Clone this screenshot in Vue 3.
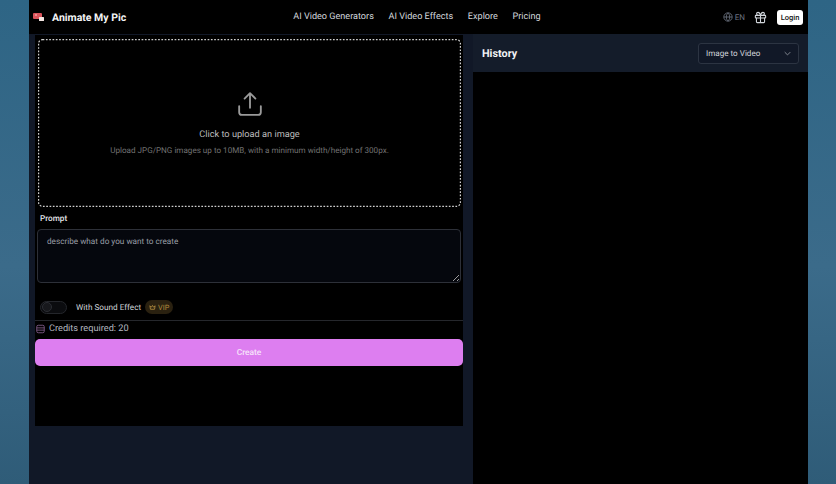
<template>
  <div class="desktop">
    <div class="window">
      <header class="topbar">
        <div class="brand">
          <svg class="logo" width="12" height="10" viewBox="0 0 12 10">
            <rect x="0" y="1" width="9" height="6" rx="1" fill="#d9535a" />
            <circle cx="3" cy="3" r="1" fill="#f0a0a0" />
            <rect x="6" y="5" width="5" height="4" rx="0.5" fill="#f3e6e2" />
          </svg>
          <span class="brand-name">Animate My Pic</span>
        </div>
        <nav class="nav">
          <a v-for="item in navItems" :key="item" class="nav-link">{{ item }}</a>
        </nav>
        <div class="actions">
          <span class="lang">
            <svg width="10" height="10" viewBox="0 0 24 24" fill="none" stroke="currentColor" stroke-width="2">
              <circle cx="12" cy="12" r="10" />
              <path d="M2 12h20M12 2c3 3 4 6.500 4 10s-1 7-4 10c-3-3-4-6.500-4-10s1-7 4-10z" />
            </svg>
            EN
          </span>
          <svg class="gift" width="13" height="13" viewBox="0 0 24 24" fill="none" stroke="currentColor" stroke-width="2" stroke-linejoin="round" stroke-linecap="round">
            <rect x="2.500" y="8" width="19" height="5" rx="1" />
            <path d="M4.500 13v7a1.500 1.500 0 0 0 1.500 1.500h12a1.500 1.500 0 0 0 1.500-1.500v-7M12 8v13.500" />
            <path d="M12 8S10.500 2.500 7.500 2.500a2.700 2.700 0 0 0 0 5.500M12 8s1.500-5.500 4.500-5.500a2.700 2.700 0 0 1 0 5.500" />
          </svg>
          <button class="login">Login</button>
        </div>
      </header>

      <main class="content">
        <section class="editor">
          <div class="dropzone">
            <!-- drawn as svg because a css dashed border can't get this short a dash -->
            <svg class="drop-border" width="423" height="168" fill="none">
              <rect x="0.600" y="0.600" width="421.800" height="166.800" rx="4" stroke="#cfcfcf" stroke-width="1.200" stroke-dasharray="1.700 1.600" />
            </svg>
            <svg class="upload-icon" width="26" height="26" viewBox="0 0 24 24" fill="none" stroke="currentColor" stroke-width="1.700" stroke-linecap="round" stroke-linejoin="round">
              <path d="M12 15.500V2.500M7 7l5-5 5 5" />
              <path d="M2 14v5.500A2.500 2.500 0 0 0 4.500 22h15a2.500 2.500 0 0 0 2.500-2.500V14" />
            </svg>
            <p class="drop-title">Click to upload an image</p>
            <p class="drop-hint">Upload JPG/PNG images up to 10MB, with a minimum width/height of 300px.</p>
          </div>

          <label class="prompt-label">Prompt</label>
          <textarea class="prompt" placeholder="describe what do you want to create"></textarea>

          <div class="sound-row">
            <span class="toggle"><span class="knob"></span></span>
            <span class="sound-label">With Sound Effect</span>
            <span class="vip">
              <svg width="7" height="7" viewBox="0 0 24 24" fill="none" stroke="currentColor" stroke-width="3" stroke-linejoin="round">
                <path d="M3 6l5 5 4-6 4 6 5-5-2 12H5z" />
              </svg>
              VIP
            </span>
          </div>

          <div class="credits">
            <svg width="9" height="10" viewBox="0 0 24 24" fill="none" stroke="currentColor" stroke-width="2.200">
              <rect x="2" y="2" width="20" height="20" rx="4" />
              <path d="M2 9h20M2 15h20" />
            </svg>
            <span>Credits required: 20</span>
          </div>

          <button class="create">Create</button>
        </section>

        <aside class="history">
          <div class="history-head">
            <h2 class="history-title">History</h2>
            <div class="select">
              <span>Image to Video</span>
              <svg width="7" height="5" viewBox="0 0 10 6" fill="none" stroke="currentColor" stroke-width="1.300">
                <path d="M1 1l4 4 4-4" />
              </svg>
            </div>
          </div>
          <div class="history-body"></div>
        </aside>
      </main>
    </div>
  </div>
</template>

<script setup>
const navItems = ['AI Video Generators', 'AI Video Effects', 'Explore', 'Pricing']
</script>

<style>
html,
body {
  margin: 0;
  background: #3a6987;
}
</style>

<style scoped>
.desktop {
  width: 836px;
  height: 484px;
  overflow: hidden;
  padding: 0 28px 0 29px;
  box-sizing: border-box;
  background: linear-gradient(180deg, #2e6585 0%, #3b6b8a 55%, #2f5c78 100%);
  font-family: Roboto, "Liberation Sans", sans-serif;
  text-rendering: geometricPrecision;
}

.window {
  height: 100%;
  display: flex;
  flex-direction: column;
  background: #111827;
}

.topbar {
  height: 34px;
  flex: none;
  display: flex;
  align-items: center;
  background: #000;
  position: relative;
}

.brand {
  display: flex;
  align-items: center;
  gap: 7px;
  padding-left: 4px;
}

.logo {
  display: block;
}

.brand-name {
  color: #f3f4f6;
  font-size: 10.500px;
  font-weight: 700;
}

.nav {
  display: flex;
  gap: 14.700px;
  margin-left: 167px;
}

.nav-link {
  color: #d1d5db;
  font-size: 9.100px;
}

.actions {
  margin-left: auto;
  display: flex;
  align-items: center;
  padding-right: 5px;
}

.lang {
  display: flex;
  align-items: center;
  gap: 2px;
  color: #6b7280;
  font-size: 8px;
}

.gift {
  color: #d1d5db;
  margin-left: 9px;
}

.login {
  margin-left: 10px;
  width: 26px;
  height: 15px;
  padding: 0;
  border: 0;
  border-radius: 3px;
  background: #fff;
  color: #111;
  font: 500 7.500px Roboto, "Liberation Sans", sans-serif;
  text-rendering: geometricPrecision;
}

.content {
  flex: 1;
  display: flex;
  min-height: 0;
}

.editor {
  width: 428px;
  height: 391px;
  margin: 1px 0 0 6px;
  flex: none;
  background: #000;
  display: flex;
  flex-direction: column;
  box-sizing: border-box;
}

.dropzone {
  height: 168px;
  margin: 4px 2px 0 3px;
  box-sizing: border-box;
  position: relative;
  display: flex;
  flex-direction: column;
  align-items: center;
}

.drop-border {
  position: absolute;
  top: 0;
  left: 0;
}

.upload-icon {
  margin-top: 52px;
  color: #9a9a9a;
}

.drop-title {
  margin: 12px 0 0;
  font-size: 9.200px;
  color: #bdbdbd;
}

.drop-hint {
  margin: 5px 0 0;
  font-size: 8.100px;
  color: #737373;
}

.prompt-label {
  margin: 7px 0 0 5px;
  color: #e5e7eb;
  font-size: 8.200px;
  font-weight: 500;
  line-height: 11px;
}

.prompt {
  display: block;
  height: 54px;
  margin: 4px 2px 0 2px;
  padding: 7px 9px;
  box-sizing: border-box;
  border: 1px solid #2d3038;
  border-radius: 4px;
  background: #05070d;
  color: #d1d5db;
  font: 8.200px Roboto, "Liberation Sans", sans-serif;
  text-rendering: geometricPrecision;
  outline: none;
}

.prompt::placeholder {
  color: #9a9fa8;
  opacity: 1;
}

.sound-row {
  display: flex;
  align-items: center;
  margin: 17px 0 0 5px;
  height: 14px;
}

.toggle {
  width: 27px;
  height: 13px;
  box-sizing: border-box;
  border: 1px solid #24262b;
  border-radius: 7px;
  background: #0b0c0f;
  display: flex;
  align-items: center;
  padding-left: 1px;
}

.knob {
  width: 10px;
  height: 10px;
  border-radius: 50%;
  background: #17181c;
  border: 1px solid #2b2d33;
  box-sizing: border-box;
}

.sound-label {
  margin-left: 9px;
  padding-top: 1px;
  color: #d1d5db;
  font-size: 8.200px;
}

.vip {
  margin-left: 4px;
  width: 28px;
  height: 14px;
  border-radius: 7px;
  background: #2a2110;
  color: #b08a3e;
  font-size: 7.300px;
  display: flex;
  align-items: center;
  justify-content: center;
  gap: 2px;
}

.credits {
  margin-top: 6px;
  height: 19px;
  padding: 0 0 3px 1px;
  box-sizing: border-box;
  border-top: 1px solid #25272c;
  display: flex;
  align-items: center;
  gap: 4px;
  color: #b5b9c0;
  font-size: 9.200px;
}

.credits svg {
  color: #8a6293;
}

.create {
  height: 27px;
  padding: 0;
  border: 0;
  border-radius: 5px;
  background: #dd7ef0;
  color: #f6e2fa;
  font: 500 8.400px Roboto, "Liberation Sans", sans-serif;
  text-rendering: geometricPrecision;
}

.history {
  width: 335px;
  margin-left: 10px;
  flex: none;
  display: flex;
  flex-direction: column;
}

.history-head {
  height: 38px;
  flex: none;
  display: flex;
  align-items: center;
  justify-content: space-between;
  padding: 0 9px;
  background: #141c2a;
}

.history-title {
  margin: 0;
  color: #f3f4f6;
  font-size: 10.800px;
  font-weight: 700;
}

.select {
  width: 101px;
  height: 21px;
  box-sizing: border-box;
  border: 1px solid #2c3442;
  border-radius: 3px;
  background: #111827;
  color: #d1d5db;
  font-size: 8.100px;
  display: flex;
  align-items: center;
  justify-content: space-between;
  padding: 0 7px;
}

.select svg {
  color: #8b9099;
}

.history-body {
  flex: 1;
  background: #000;
}
</style>
